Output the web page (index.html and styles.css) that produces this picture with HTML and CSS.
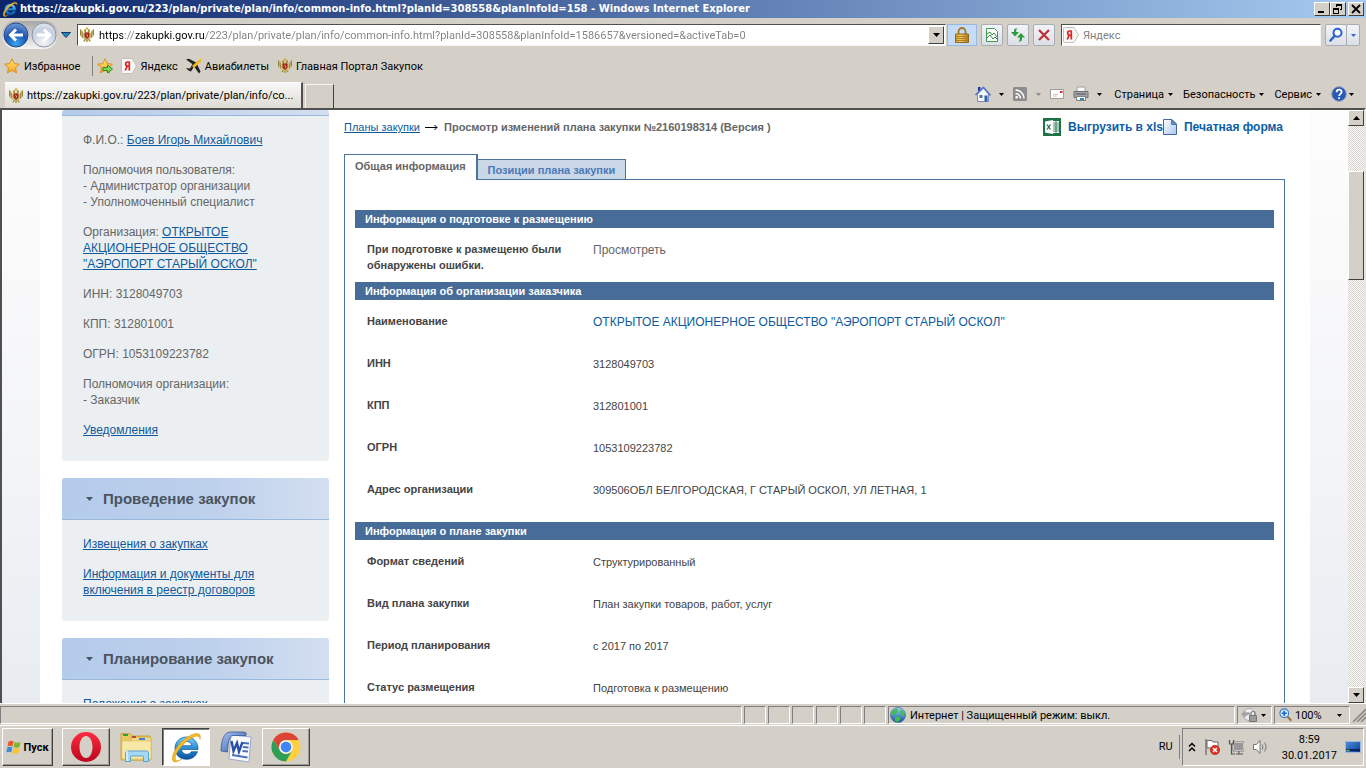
FILE: index.html
```html
<!DOCTYPE html>
<html lang="ru">
<head>
<meta charset="utf-8">
<title>Просмотр изменений плана закупки</title>
<link rel="stylesheet" href="styles.css">
</head>
<body>
<svg class="defs" aria-hidden="true">
  <defs>
    <linearGradient id="ieBlue" x1="0" y1="0" x2="0" y2="1"><stop offset="0" stop-color="#7fd0f8"/><stop offset=".5" stop-color="#2b8fd8"/><stop offset="1" stop-color="#0b4f9c"/></linearGradient>
    <radialGradient id="backBlue" cx=".5" cy=".85" r=".9"><stop offset="0" stop-color="#3aa5f0"/><stop offset=".5" stop-color="#1d55b0"/><stop offset="1" stop-color="#7fa3dc"/></radialGradient>
    <radialGradient id="fwdGrey" cx=".5" cy=".8" r=".9"><stop offset="0" stop-color="#f4f6fa"/><stop offset=".6" stop-color="#c4cede"/><stop offset="1" stop-color="#f0f3f8"/></radialGradient>
    <linearGradient id="starGold" x1="0" y1="0" x2="0" y2="1"><stop offset="0" stop-color="#ffe680"/><stop offset="1" stop-color="#f6a51c"/></linearGradient>
    <linearGradient id="lockGold" x1="0" y1="0" x2="1" y2="0"><stop offset="0" stop-color="#e0a42c"/><stop offset=".4" stop-color="#f0c860"/><stop offset="1" stop-color="#b87c18"/></linearGradient>
    <linearGradient id="operaRed" x1="0" y1="0" x2="0" y2="1"><stop offset="0" stop-color="#ff2a40"/><stop offset="1" stop-color="#b8081c"/></linearGradient>
    <linearGradient id="docBlue" x1="0" y1="0" x2="1" y2="1"><stop offset="0" stop-color="#ffffff"/><stop offset="1" stop-color="#a9c4ee"/></linearGradient>
    <linearGradient id="wordBlue" x1="0" y1="0" x2="1" y2="1"><stop offset="0" stop-color="#a8c4ee"/><stop offset="1" stop-color="#2c55a8"/></linearGradient>
    <linearGradient id="globeBlue" x1="0" y1="0" x2="0" y2="1"><stop offset="0" stop-color="#a4d0f0"/><stop offset="1" stop-color="#1450a0"/></linearGradient>
    <linearGradient id="screenBlue" x1="0" y1="0" x2="1" y2="1"><stop offset="0" stop-color="#4a90e0"/><stop offset="1" stop-color="#0c3a90"/></linearGradient>
    <symbol id="ie" viewBox="0 0 32 32">
      <path d="M28 18.500H11.500c.3 3 2.500 4.700 5.200 4.700 2 0 3.600-.8 4.600-2.500h6.200c-1.700 5-6 7.600-11 7.600C9.800 28.300 5 23.800 5 17.300 5 10.800 9.900 6 16.500 6 23.500 6 28.300 11 28 18.500zM11.600 14.700h10.100c-.3-2.600-2.400-4.200-5-4.200s-4.700 1.600-5.100 4.200z" fill="url(#ieBlue)" stroke="#0c5590" stroke-width=".7"/>
      <path d="M3.500 30.500C-1 26 8 11 20 4.500 27 .8 32 2 30 8.500c.1-4-3.500-4.300-8.500-1.500C12 12.500 1.500 26.500 6.500 29.500c1.500.6 4-.7 5.500-1.700-3 2.700-6.500 4-8.500 2.700z" fill="#f5b823" stroke="#c98a10" stroke-width=".4"/>
    </symbol>
    <symbol id="eagle" viewBox="0 0 16 16">
      <path d="M1.500 2 1 5l.5 4 2 2.500 2 .5L4 14l1 1 2-1.500L8 15.500l1-2 2 1.500 1-1-1.500-2 2-.5 2-2.500.5-4-.5-3-2 1.500L11.500 6H4.500L3.500 3.500z" fill="#d0bf7c"/>
      <path d="M1.500 2.500v6M3 4.500 3.500 10M14.500 2.500v6M13 4.500 12.500 10M5 14l1.500-2M11 14l-1.500-2M8 12.500V15" stroke="#948440" fill="none"/>
      <path d="M5 3.500q0-1.500 1.800-1.200L7.500 6H6zM11 3.500q0-1.500-1.800-1.200L8.500 6H10z" fill="#a88a2c"/>
      <path d="M6.800.5h2.400v2H6.800z" fill="#d4a83c"/>
      <path d="M5.500 5.500h5v4.300L8 12 5.500 9.800z" fill="#a02818"/>
      <path d="m7.200 7 1.500 1-.8 2" stroke="#e8c8b0" stroke-width=".7" fill="none"/>
    </symbol>
    <symbol id="star" viewBox="0 0 16 16"><path d="m8 .8 2.200 4.800 5.200.6-3.900 3.500 1.100 5.200L8 12.300l-4.600 2.600 1.100-5.200L.6 6.200l5.200-.6z" fill="url(#starGold)" stroke="#d8891a" stroke-width=".9" stroke-linejoin="round"/></symbol>
    <symbol id="yandex" viewBox="0 0 16 16">
      <path d="M1.500.5H11l4.500 7.500-4.500 7.500H1.500a1 1 0 0 1-1-1v-13a1 1 0 0 1 1-1z" fill="#f7f7f7" stroke="#c4c0b8"/>
      <path d="M8.300 3.500v9M8.300 4H6.400c-2.300 0-2.300 4 0 4h1.900M6.200 8.200 4.200 12.500" fill="none" stroke="#e02020" stroke-width="1.700"/>
    </symbol>
    <symbol id="caret" viewBox="0 0 7 4"><path d="M0 0h7L3.500 4z" fill="currentColor"/></symbol>
  </defs>
</svg>

<header class="titlebar">
  <svg class="icon16"><use href="#ie"/></svg>
  <h1 class="window-title">https://zakupki.gov.ru/223/plan/private/plan/info/common-info.html?planId=308558&amp;planInfoId=158 - Windows Internet Explorer</h1>
  <button class="win-btn" aria-label="Свернуть"><svg viewBox="0 0 12 10"><path d="M2 7h6v2H2z"/></svg></button>
  <button class="win-btn" aria-label="Восстановить"><svg viewBox="0 0 12 10"><path d="M4 0h6v6H8V5h1V2H5v1H4zM1 4h6v6H1zm1 2v3h4V6z" fill-rule="evenodd"/></svg></button>
  <button class="win-btn win-close" aria-label="Закрыть"><svg viewBox="0 0 12 10"><path d="m2 1 8 8M10 1 2 9" stroke="#000" stroke-width="1.800"/></svg></button>
</header>

<nav class="addressbar" aria-label="Навигация">
  <div class="travel">
    <button class="travel-btn" aria-label="Назад"><svg viewBox="0 0 26 26"><circle cx="13" cy="13" r="12" fill="url(#backBlue)" stroke="#234a8c"/><path d="M20 13H8M13 7.500 7.500 13l5.500 5.500" fill="none" stroke="#fff" stroke-width="3"/></svg></button>
    <button class="travel-btn" aria-label="Вперёд"><svg viewBox="0 0 26 26"><circle cx="13" cy="13" r="12" fill="url(#fwdGrey)" stroke="#8c96a4"/><path d="M6 13h12M13 7.500l5.500 5.500-5.500 5.500" fill="none" stroke="#fff" stroke-width="3"/></svg></button>
  </div>
  <button class="history-btn" aria-label="Последние страницы"><svg viewBox="0 0 10 6"><path d="M.5.500h9L5 5.500z" fill="#1c86c8" stroke="#123c68"/></svg></button>
  <div class="field field-address">
    <svg class="icon16"><use href="#eagle"/></svg>
    <input class="field-input url-input" type="text" aria-label="Адрес" value="https://zakupki.gov.ru/223/plan/private/plan/info/common-info.html?planId=308558&amp;planInfoId=1586657&amp;versioned=&amp;activeTab=0">
    <button class="combo-btn" aria-label="Показать адреса"><svg class="caret"><use href="#caret"/></svg></button>
  </div>
  <button class="lock-btn" aria-label="Безопасность сайта"><svg class="icon16" viewBox="0 0 16 16"><path d="M4.500 8V4.500a3.500 3.500 0 0 1 7 0V8" fill="none" stroke="#a87820" stroke-width="1.800"/><path d="M1.500 7h13v8.500h-13z" fill="url(#lockGold)" stroke="#94661a"/><path d="M2 9.500h12M2 11.500h12M2 13.500h12" stroke="#a4731c" stroke-width=".8"/></svg></button>
  <button class="tool-btn" aria-label="Режим совместимости"><svg viewBox="0 0 16 16"><path d="M2.500 1.500h8l3 3v10h-11z" fill="#fff" stroke="#3c9c50"/><path d="m3 7 3-2 2 3 2-2 3 4M3 11l3-3 3 4 2-2 2 2" stroke="#2f8c44" fill="none"/></svg></button>
  <button class="tool-btn" aria-label="Обновить"><svg viewBox="0 0 16 16"><path d="M7.500 1.500H6C4.500 1.500 4 2.500 4 4v1H1l4 4.500L9 5H6.200c0-2 0-2.500 1.300-3.500z" fill="#2c9c3c"/><path d="M8.500 14.500H10c1.500 0 2-1 2-2.500v-1.500h3L11 6 7 10.500h2.800c0 2 0 3-1.300 4z" fill="#2c9c3c"/></svg></button>
  <button class="tool-btn" aria-label="Остановить"><svg viewBox="0 0 16 16"><path d="m3 3 10 10M13 3 3 13" stroke="#c03038" stroke-width="2.200"/></svg></button>
  <div class="field field-search">
    <svg class="icon16"><use href="#yandex"/></svg>
    <input class="field-input" type="text" aria-label="Поиск" placeholder="Яндекс">
  </div>
  <div class="search-group">
    <button class="tool-btn" aria-label="Найти"><svg viewBox="0 0 16 16"><circle cx="9.500" cy="5.800" r="4" fill="#fff" stroke="#2a62d0" stroke-width="2"/><path d="m6.500 9-4 4.500" stroke="#2a62d0" stroke-width="2.600" stroke-linecap="round"/></svg></button>
    <button class="tool-btn tool-narrow" aria-label="Параметры поиска"><svg class="caret caret-blue"><use href="#caret"/></svg></button>
  </div>
</nav>

<nav class="favorites" aria-label="Избранное">
  <button class="fav-button"><svg class="icon16"><use href="#star"/></svg>Избранное</button>
  <button class="fav-add" aria-label="Добавить в избранное"><svg class="icon16" viewBox="0 0 16 16"><use href="#star"/><path d="M6 9.500h4.500V7l5 4-5 4v-2.500H6z" fill="#7ed858" stroke="#2c8c24"/></svg></button>
  <a class="fav-link" href="#"><svg class="icon16"><use href="#yandex"/></svg>Яндекс</a>
  <a class="fav-link" href="#"><svg class="icon16" viewBox="0 0 16 16"><path d="M0 1.500 3 .8l8 4.200-2 3zM11 6l3.500 7.500-1.500 2L8 8.500zM9 7l-4 6.500-2.500-1L0 10l4 .5L6.500 6z" fill="#222"/><path d="M14.500.5 15.500 3 8 10 6 8z" fill="#f2b81c"/></svg>Авиабилеты</a>
  <a class="fav-link" href="#"><svg class="icon16"><use href="#eagle"/></svg>Главная Портал Закупок</a>
</nav>

<div class="tabrow">
  <button class="browser-tab"><svg class="icon16"><use href="#eagle"/></svg><span class="tab-title">https://zakupki.gov.ru/223/plan/private/plan/info/co...</span></button>
  <button class="new-tab" aria-label="Создать вкладку"></button>
  <div class="commands">
    <button class="cmd" aria-label="Домой"><svg class="icon16" viewBox="0 0 16 16"><path d="M3 1h2.500v5H3z" fill="#2038a8"/><path d="M2.500 8 8.500 2l5 6v7.500h-11z" fill="#f4f6fc" stroke="#7888b8"/><path d="m.5 9 8-7.500 7 8" fill="none" stroke="#5c78c0" stroke-width="1.600"/><path d="M4.500 9h3v3h-3z" fill="#58709c"/><path d="M9.500 9.500h3v6h-3z" fill="#2860b0"/></svg><svg class="caret cmd-caret"><use href="#caret"/></svg></button>
    <button class="cmd cmd-off" aria-label="Веб-каналы"><svg class="icon16" viewBox="0 0 16 16"><rect x="1" y="1" width="14" height="14" rx="1.500" fill="#8c8c8c"/><circle cx="4.700" cy="11.300" r="1.300" fill="#fff"/><path d="M3.500 7.500a5 5 0 0 1 5 5M3.500 4a8.500 8.500 0 0 1 8.500 8.500" fill="none" stroke="#fff" stroke-width="1.500"/></svg><svg class="caret cmd-caret"><use href="#caret"/></svg></button>
    <button class="cmd" aria-label="Почта"><svg class="icon16" viewBox="0 0 16 16"><path d="M1.500 3.500h13v9h-13z" fill="#fdfdfd" stroke="#a09c98"/><path d="M11 5h2.500v2H11z" fill="#d02838"/><path d="M4 8.500h5M4 10h4" stroke="#c8c8d0"/></svg></button>
    <button class="cmd" aria-label="Печать"><svg class="icon16" viewBox="0 0 16 16"><path d="M4 1h8v5H4z" fill="#f8f8f8" stroke="#a0a0a0"/><path d="M1 5.500h14v6H1z" fill="#a4a4a8" stroke="#707074"/><path d="M3 8h10" stroke="#555"/><path d="M3.500 10.500h9v4h-9z" fill="#fff" stroke="#808080"/><path d="M7 12h4v2H7z" fill="#3088b0"/></svg><svg class="caret cmd-caret"><use href="#caret"/></svg></button>
    <button class="cmd cmd-text">Страница<svg class="caret"><use href="#caret"/></svg></button>
    <button class="cmd cmd-text">Безопасность<svg class="caret"><use href="#caret"/></svg></button>
    <button class="cmd cmd-text">Сервис<svg class="caret"><use href="#caret"/></svg></button>
    <button class="cmd cmd-help" aria-label="Справка"><svg class="icon16" viewBox="0 0 16 16"><circle cx="8" cy="8" r="7.200" fill="#2858b8" stroke="#7c90b8"/><path d="M5.600 6.200c0-3.400 5-3.200 5-.2 0 1.900-2.400 1.900-2.400 4M8.100 11.200v1.900" fill="none" stroke="#fff" stroke-width="1.800"/></svg><svg class="caret"><use href="#caret"/></svg></button>
  </div>
</div>

<div class="viewport">
  <div class="page">
    <div class="sheet">
      <aside class="sidebar">
        <section class="panel">
          <div class="panel-edge"></div>
          <div class="panel-body">
            <p>Ф.И.О.: <a href="#">Боев Игорь Михайлович</a></p>
            <p>Полномочия пользователя:<br>- Администратор организации<br>- Уполномоченный специалист</p>
            <p>Организация: <a href="#">ОТКРЫТОЕ АКЦИОНЕРНОЕ ОБЩЕСТВО "АЭРОПОРТ СТАРЫЙ ОСКОЛ"</a></p>
            <p>ИНН: 3128049703</p>
            <p>КПП: 312801001</p>
            <p>ОГРН: 1053109223782</p>
            <p>Полномочия организации:<br>- Заказчик</p>
            <p><a href="#">Уведомления</a></p>
          </div>
        </section>
        <section class="panel">
          <h2 class="panel-head"><svg class="caret"><use href="#caret"/></svg>Проведение закупок</h2>
          <div class="panel-body">
            <p><a href="#">Извещения о закупках</a></p>
            <p><a href="#">Информация и документы для включения в реестр договоров</a></p>
          </div>
        </section>
        <section class="panel">
          <h2 class="panel-head"><svg class="caret"><use href="#caret"/></svg>Планирование закупок</h2>
          <div class="panel-body">
            <p><a href="#">Положения о закупках</a></p>
          </div>
        </section>
      </aside>
      <main class="main">
        <div class="topline">
          <div class="crumbs">
            <a href="#">Планы закупки</a>
            <svg class="crumb-arrow" viewBox="0 0 13 7"><path d="M0 3.500h12M9.500 1l2.500 2.500L9.500 6" fill="none" stroke="#000"/></svg>
            <strong>Просмотр изменений плана закупки №2160198314 (Версия )</strong>
          </div>
          <div class="exports">
            <a class="export-xls" href="#"><svg class="icon18" viewBox="0 0 18 18"><path d="M0 0h18v18H0z" fill="#1f7246"/><path d="M9.500 3H16v12H9.500z" fill="#fff"/><path d="M10 5h6M10 7h6M10 9h6M10 11h6M10 13h6M13 3v12" stroke="#1f7246" stroke-width=".8"/><path d="m2 3.500 8-1.500v14l-8-1.500z" fill="#fff"/><path d="m4 6.500 3.500 5M7.500 6.500 4 11.500" stroke="#1f7246" stroke-width="1.300"/></svg><span>Выгрузить в xls</span></a>
            <a class="export-print" href="#"><svg class="icon-doc" viewBox="0 0 14 16"><path d="M.5.500h8.500l4.500 4.500v10.500H.5z" fill="url(#docBlue)" stroke="#46679c"/><path d="M8.500.5v5h5z" fill="#6c8cc4" stroke="#46679c" stroke-width=".8"/></svg><span>Печатная форма</span></a>
          </div>
        </div>
        <div class="tabs" role="tablist">
          <button class="tab tab-active" role="tab" aria-selected="true">Общая информация</button>
          <button class="tab" role="tab" aria-selected="false">Позиции плана закупки</button>
        </div>
        <div class="tabpanel" role="tabpanel">
          <h3 class="bar">Информация о подготовке к размещению</h3>
          <dl class="props">
            <div class="prop"><dt>При подготовке к размещеню были обнаружены ошибки.</dt><dd class="large">Просмотреть</dd></div>
          </dl>
          <h3 class="bar">Информация об организации заказчика</h3>
          <dl class="props props-spaced">
            <div class="prop"><dt>Наименование</dt><dd class="large"><a href="#">ОТКРЫТОЕ АКЦИОНЕРНОЕ ОБЩЕСТВО "АЭРОПОРТ СТАРЫЙ ОСКОЛ"</a></dd></div>
            <div class="prop"><dt>ИНН</dt><dd>3128049703</dd></div>
            <div class="prop"><dt>КПП</dt><dd>312801001</dd></div>
            <div class="prop"><dt>ОГРН</dt><dd>1053109223782</dd></div>
            <div class="prop"><dt>Адрес организации</dt><dd>309506ОБЛ БЕЛГОРОДСКАЯ, Г СТАРЫЙ ОСКОЛ, УЛ ЛЕТНАЯ, 1</dd></div>
          </dl>
          <h3 class="bar">Информация о плане закупки</h3>
          <dl class="props">
            <div class="prop"><dt>Формат сведений</dt><dd>Структурированный</dd></div>
            <div class="prop"><dt>Вид плана закупки</dt><dd>План закупки товаров, работ, услуг</dd></div>
            <div class="prop"><dt>Период планирования</dt><dd>с 2017 по 2017</dd></div>
            <div class="prop"><dt>Статус размещения</dt><dd>Подготовка к размещению</dd></div>
          </dl>
        </div>
      </main>
    </div>
  </div>
  <div class="scrollbar">
    <button class="scroll-btn" aria-label="Вверх"><svg class="caret caret-up"><use href="#caret"/></svg></button>
    <div class="scroll-track"><div class="scroll-thumb"></div></div>
    <button class="scroll-btn" aria-label="Вниз"><svg class="caret"><use href="#caret"/></svg></button>
  </div>
</div>

<footer class="statusbar">
  <div class="cell cell-wide"></div>
  <div class="cell"></div><div class="cell"></div><div class="cell"></div><div class="cell"></div><div class="cell"></div><div class="cell"></div>
  <div class="cell cell-zone"><svg class="icon16" viewBox="0 0 16 16"><circle cx="8" cy="8" r="7.500" fill="url(#globeBlue)" stroke="#285c98" stroke-width=".6"/><path d="M3 3.500 7 1.500l1 2L6 6.500 4 8 1.500 7zM10 3l3 1 1.800 4-2.300 1.500L10.500 6.500zM5.500 9.500l4 .5 1 2.500-3 2.500-3-1.500z" fill="#3cc048"/></svg><span>Интернет | Защищенный режим: выкл.</span></div>
  <button class="cell cell-lock" aria-label="Конфиденциальность"><svg class="icon16" viewBox="0 0 16 16"><circle cx="8" cy="7.500" r="6" fill="#eee" stroke="#aaa"/><path d="m0 7 4.500-3.500v2C7 5 9 5 10 7L4.500 9v2z" fill="#a4a4a4"/><path d="M8.500 8.500h7v6h-7z" fill="#9c9c9c" stroke="#777"/><path d="M10 8.500v-2a2 2 0 0 1 4 0v2" fill="none" stroke="#777" stroke-width="1.200"/></svg><svg class="caret"><use href="#caret"/></svg></button>
  <button class="cell cell-zoom"><svg class="icon14" viewBox="0 0 16 16"><path d="m9 9 5 5.500" stroke="#a06c3c" stroke-width="2.400"/><circle cx="6" cy="6" r="5" fill="#d8ecfc" stroke="#3c78c0" stroke-width="1.200"/><path d="M6 3v6M3 6h6" stroke="#1868d0" stroke-width="1.900"/></svg><span>100%</span><svg class="caret"><use href="#caret"/></svg></button>
  <svg class="grip" viewBox="0 0 14 14"><path d="M1 14 14 1M5 14l9-9M9 14l5-5" stroke="#8c8880" stroke-width="1.600"/></svg>
</footer>

<footer class="taskbar">
  <button class="task start"><svg class="start-flag" viewBox="0 0 16 16"><path d="M2.500 2.500q2.500-1.500 5 0L6.500 7.500q-2.500-1.500-5 0z" fill="#e8582c"/><path d="M8.500 3q2.500 1.500 6 0l-1 5q-3 1.500-6 0z" fill="#7cb82c"/><path d="M1.300 8.500q2.500-1.500 5 0l-1 5q-2.500-1.500-5 0z" fill="#3c88d8"/><path d="M7.300 9q2.500 1.500 6 0l-1 5q-3 1.500-6 0z" fill="#f8c428"/></svg>Пуск</button>
  <button class="task task-opera" aria-label="Opera"><svg class="icon32" viewBox="0 0 32 32"><path fill-rule="evenodd" d="M16 1a15 15 0 1 1 0 30 15 15 0 0 1 0-30zm0 4c-4 0-6.500 5-6.500 11S12 27 16 27s6.500-5 6.500-11S20 5 16 5z" fill="url(#operaRed)"/></svg></button>
  <button class="task task-flat" aria-label="Проводник"><svg class="icon32" viewBox="0 0 32 32"><path d="M1 5V2.500h9L12 5h18v24H1z" fill="#e8c860" stroke="#c8a440"/><path d="M3 3h5v2H3z" fill="#30a040"/><path d="M11 6h20v23H11z" fill="#f0d888" stroke="#c8a440" stroke-width=".7"/><path d="M12 5h4v2h-4z" fill="#c04828"/><path d="M19 7h6v2h-6z" fill="#3c80d0"/><path d="M2 10h29v18H2z" fill="#f8e8a8" stroke="#d8bc60" stroke-width=".6"/><path d="M5.500 30.500V22q0-2 2-2h19q2 0 2 2v8.500h-5V26q0-1-1-1h-11q-1 0-1 1v4.500z" fill="#a4d8f4" stroke="#5ca4cc"/><path d="M7 20V30" stroke="#e0f4fc" stroke-width="1.500"/></svg></button>
  <button class="task task-pressed" aria-label="Internet Explorer"><svg class="icon32"><use href="#ie"/></svg></button>
  <button class="task task-flat" aria-label="Word"><svg class="icon32" viewBox="0 0 32 32"><path d="M11 4 31 6l-2 25-20-3z" fill="#f8faff" stroke="#98aacc"/><path d="M23 12l6 .5M23 16l5.500.5M22.500 20l5.500.5M12 24l15.500 2.500" stroke="#4c70b8" stroke-width="2"/><path d="M1 20C1 10 4 1 10 1h14q3 0 2 3.500H13C9 5 8 12 7.500 21z" fill="url(#wordBlue)" stroke="#2c4c94" stroke-width=".7"/><path d="m11.500 10 2 10 3.500-8 2 8.500L22.500 11" fill="none" stroke="#2850a8" stroke-width="2.400"/></svg></button>
  <button class="task" aria-label="Chrome"><svg class="icon32" viewBox="0 0 32 32"><circle cx="16" cy="16" r="14.500" fill="#fcd040"/><path d="M3.440 8.750A14.500 14.500 0 0 1 28.560 8.750L28.600 9H16A7 7 0 0 0 9.940 19.500z" fill="#db4437"/><path d="M3.440 8.750A14.500 14.500 0 0 0 16 30.500L22.060 19.500A7 7 0 0 1 9.940 19.500z" fill="#2f9e58"/><circle cx="16" cy="16" r="6.800" fill="#fff"/><circle cx="16" cy="16" r="5.400" fill="#4285f4"/></svg></button>
  <div class="lang">RU</div>
  <div class="tray">
    <button class="tray-btn tray-more" aria-label="Показать скрытые значки"><svg viewBox="0 0 8 10"><path d="m1 4.500 3-3 3 3M1 9l3-3 3 3" fill="none" stroke="#000" stroke-width="1.500"/></svg></button>
    <button class="tray-btn" aria-label="Центр поддержки"><svg class="icon16" viewBox="0 0 16 16"><path d="M2 0v16" stroke="#777" stroke-width="1.500"/><path d="M3 1.500h5l1 1.500h5v7H8L7 9H3z" fill="#fff" stroke="#666"/><circle cx="11" cy="11" r="4.700" fill="#e03020" stroke="#a81c14" stroke-width=".6"/><path d="m9 9 4 4M13 9l-4 4" stroke="#fff" stroke-width="1.500"/></svg></button>
    <button class="tray-btn" aria-label="Сеть"><svg class="icon16" viewBox="0 0 16 16"><path d="M5.500 3.500h10v8h-10z" fill="#999" stroke="#fff" /><path d="M5 3h11v9H5z" fill="none" stroke="#555" stroke-width=".7"/><path d="M8 15h7M11 12v3" stroke="#555"/><path d="M1.500 1v4h4V1M3.500 5v10H7" fill="none" stroke="#555" stroke-width="1.200"/></svg></button>
    <button class="tray-btn" aria-label="Громкость"><svg class="icon16" viewBox="0 0 16 16"><path d="M1.500 5.500h3L8 1.500v13l-3.500-4h-3z" fill="#fff" stroke="#777"/><path d="M10 5.500q1.500 2.500 0 5M12.500 3.500q3 4.500 0 9" fill="none" stroke="#888" stroke-width="1.200"/></svg></button>
    <div class="clock"><time>8:59</time><time>30.01.2017</time></div>
    <button class="tray-btn" aria-label="Показать рабочий стол"><svg class="icon16" viewBox="0 0 16 16"><path d="M.5 2.500h15v11H.5z" fill="url(#screenBlue)" stroke="#9cb8dc"/><path d="M1 11h14" stroke="#0c2458" stroke-width="2"/><path d="M1.500 11.500h3" stroke="#5cc060" stroke-width="1.500"/></svg></button>
  </div>
</footer>
</body>
</html>
```
FILE: styles.css
```css
* { box-sizing: border-box; }

body {
  margin: 0;
  height: 100vh;
  display: flex;
  flex-direction: column;
  overflow: hidden;
  background: #d4d0c8;
  color: #000;
  font: 11px/15px Roboto, Tahoma, sans-serif;
}

button {
  margin: 0;
  padding: 0;
  border: 0;
  background: none;
  color: inherit;
  font: inherit;
  display: flex;
  align-items: center;
}

h1, h2, h3, p, dl, dd { margin: 0; }

svg { display: block; flex: none; }
.defs { position: absolute; width: 0; height: 0; }
.icon14 { width: 14px; height: 14px; }
.icon16 { width: 16px; height: 16px; }
.icon18 { width: 18px; height: 18px; }
.icon32 { width: 32px; height: 32px; }
.icon-doc { width: 14px; height: 16px; }
.caret { width: 7px; height: 4px; }
.caret-up { transform: rotate(180deg); }
.caret-blue { color: #2a62d0; }

/* Title bar */
.titlebar {
  flex: none;
  height: 18px;
  display: flex;
  align-items: center;
  padding: 0 2px;
  background: linear-gradient(to right, #0a246a, #a6caf0);
  color: #fff;
}
.window-title {
  flex: 1;
  margin-left: 2px;
  overflow: hidden;
  white-space: nowrap;
  font: bold 10px/16px "DejaVu Sans", Verdana, sans-serif;
}
.win-btn {
  width: 16px;
  height: 14px;
  justify-content: center;
  background: #d4d0c8;
  border: 1px solid;
  border-color: #fff #404040 #404040 #fff;
}
.win-btn svg { width: 12px; height: 10px; }
.win-close { margin-left: 2px; }

/* Address row */
.addressbar {
  flex: none;
  height: 34px;
  display: flex;
  align-items: center;
  padding: 0 6px 0 2px;
}
.travel {
  display: flex;
  gap: 2px;
  padding: 1px;
  border-radius: 14px;
  background: linear-gradient(#a8a8a8, #f4f4f4);
}
.travel-btn svg { width: 26px; height: 26px; }
.history-btn { margin: 0 6px 0 3px; }
.history-btn svg { width: 10px; height: 6px; }
.field {
  display: flex;
  align-items: center;
  height: 22px;
  padding: 1px;
  background: #fff;
  border: 1px solid;
  border-color: #505050 #f4f4f4 #f4f4f4 #505050;
}
.field-address { flex: 1; min-width: 0; }
.field-input {
  flex: 1;
  min-width: 0;
  border: 0;
  padding: 0 4px;
  outline: 0;
  background: none;
  font: inherit;
  color: #000;
}
.field-input::placeholder { color: #808080; opacity: 1; }
.url-input {
  color: transparent;
  background: linear-gradient(to right, #000 28px, #808080 28px, #808080 41px, #000 41px, #000 109px, #808080 109px);
  -webkit-background-clip: text;
  background-clip: text;
}
.combo-btn, .scroll-btn {
  flex: none;
  width: 16px;
  height: 18px;
  justify-content: center;
  background: #d4d0c8;
  border: 1px solid;
  border-color: #fff #404040 #404040 #fff;
}
.lock-btn {
  flex: none;
  width: 30px;
  height: 22px;
  margin: 0 4px 0 1px;
  justify-content: center;
  background: #c4dcf8;
  border: 1px solid #98b8e0;
}
.tool-btn {
  flex: none;
  width: 22px;
  height: 22px;
  margin-right: 4px;
  justify-content: center;
  background: linear-gradient(#f2f4f8, #dcdfe6);
  border: 1px solid #a8acb4;
  border-radius: 2px;
}
.tool-btn svg { width: 16px; height: 16px; }
.field-search { flex: 0 1 260px; margin: 0 4px 0 2px; }
.search-group { display: flex; }
.search-group .tool-btn { margin: 0; }
.search-group .tool-narrow { width: 14px; margin-left: -1px; }
.tool-narrow .caret { width: 5px; height: 3px; }

/* Favorites row */
.favorites {
  flex: none;
  height: 28px;
  display: flex;
  align-items: center;
  padding-left: 4px;
}
.fav-button { gap: 4px; padding-right: 12px; }
.fav-add {
  height: 20px;
  padding: 0 8px 0 4px;
  border-left: 1px solid #808080;
}
.fav-link {
  display: flex;
  align-items: center;
  gap: 3px;
  margin-right: 8px;
  color: inherit;
  text-decoration: none;
}

/* Browser tabs and commands */
.tabrow {
  flex: none;
  height: 28px;
  display: flex;
  align-items: flex-end;
  padding-left: 5px;
}
.browser-tab {
  flex: 0 1 298px;
  min-width: 0;
  height: 26px;
  gap: 3px;
  padding: 0 4px 0 3px;
  background: linear-gradient(#f8f8f6, #dedbd5);
  border-top: 1px solid #fff;
  border-right: 2px solid #505050;
}
.tab-title { white-space: nowrap; overflow: hidden; }
.new-tab {
  flex: none;
  width: 29px;
  height: 24px;
  margin-left: 2px;
  border: 1px solid #f4f4f4;
  border-right-color: #404040;
  border-bottom: 0;
}
.commands {
  margin-left: auto;
  height: 28px;
  display: flex;
  align-items: center;
  padding-right: 12px;
}
.commands .caret { width: 5px; height: 3px; }
.cmd { flex: none; margin-right: 8px; }
.cmd-caret { margin-left: 8px; }
.cmd-off .caret { color: #8c8c8c; }
.cmd-text { gap: 4px; margin: 0 10px 0 0; }
.cmd-text:nth-child(5) { margin-left: 4px; }
.cmd-help { gap: 2px; margin: 0; }

/* Document window */
.viewport {
  flex: 1;
  min-height: 0;
  display: flex;
  border-top: 2px solid #505050;
  border-left: 2px solid #505050;
  border-right: 2px solid #e8e6e2;
}
.page {
  flex: 1;
  min-width: 0;
  overflow: hidden;
  padding: 0 38px;
  background: linear-gradient(#fdfdfd, #f4f5f7 55%, #e8ecf1);
}
.sheet {
  display: flex;
  gap: 15px;
  height: 100%;
  padding: 0 25px 0 22px;
  background: #fff;
  font: 12px/16px "Liberation Sans", Arial, sans-serif;
  color: #666;
}
.sheet a { color: #0f5a9c; }

.sidebar { flex: none; width: 267px; }
.panel {
  margin-bottom: 17px;
  border-radius: 3px;
  overflow: hidden;
  background: #ebeff2;
}
.panel-edge {
  height: 6px;
  background: linear-gradient(to right, #b4cbea, #d3dff0);
  border-bottom: 1px solid #9ab7dc;
}
.panel-head {
  display: flex;
  align-items: center;
  gap: 10px;
  height: 42px;
  padding-left: 24px;
  background: linear-gradient(to right, #b4cbea, #bdd0ec 55%, #d3dff0);
  border-bottom: 1px solid #9ab7dc;
  font-size: 15px;
  color: #4a545e;
}
.panel-body { padding: 16px 40px 9px 21px; }
.panel-body p { margin-bottom: 14px; }

.main { flex: 1; min-width: 0; }
.topline {
  display: flex;
  justify-content: space-between;
  align-items: center;
  height: 34px;
  font-size: 11px;
}
.crumbs { display: flex; align-items: center; gap: 5px; }
.crumb-arrow { width: 13px; height: 7px; margin-right: 1px; }
.exports { display: flex; font-size: 12px; font-weight: bold; }
.exports a { display: flex; align-items: center; text-decoration: none; }
.sheet .exports a { color: #0d5ea6; }
.export-xls { gap: 7px; }
.export-print { gap: 7px; padding-right: 2px; }

.tabs {
  display: flex;
  align-items: flex-end;
  margin-top: 10px;
}
.tab {
  height: 20px;
  padding: 0 10px;
  border: 1px solid #4c7399;
  border-left: 0;
  border-bottom: 0;
  background: #c9d7e7;
  color: #4a7ab8;
  font-weight: bold;
  font-size: 11px;
}
.tab-active {
  position: relative;
  z-index: 1;
  height: 26px;
  margin-bottom: -1px;
  padding-bottom: 3px;
  border-left: 1px solid #4c7399;
  border-right-width: 2px;
  background: #fff;
  color: #666;
}
.tabpanel {
  padding: 30px 10px 0;
  border: 1px solid #4c7399;
  border-bottom: 0;
}
.bar {
  padding-left: 10px;
  background: #486c98;
  color: #fff;
  font-size: 11px;
  line-height: 18px;
}
.props-spaced { margin-bottom: 12px; }
.prop {
  display: flex;
  min-height: 42px;
  padding: 13px 12px 9px;
  font-size: 11px;
  color: #444;
}
.prop dt { flex: none; width: 226px; padding-right: 20px; font-weight: bold; }
.prop dd { padding-top: 1px; }
.prop .large { font-size: 12px; color: #666; }
.large a { text-decoration: none; }

/* Scrollbar */
.scrollbar { flex: none; width: 16px; display: flex; flex-direction: column; }
.scroll-btn { height: 16px; }
.scroll-track {
  flex: 1;
  padding-top: 45px;
  background: repeating-conic-gradient(#fff 0 25%, #d4d0c8 0 50%) 0 0 / 2px 2px;
}
.scroll-thumb {
  height: 109px;
  background: #d4d0c8;
  border: 1px solid;
  border-color: #fff #404040 #404040 #fff;
}

/* Status bar */
.statusbar {
  flex: none;
  height: 23px;
  display: flex;
  align-items: center;
  gap: 2px;
  padding-top: 1px;
  border-top: 1px solid #fff;
  border-bottom: 1px solid #fff;
}
.cell {
  flex: none;
  width: 22px;
  height: 18px;
  display: flex;
  align-items: center;
  border: 1px solid;
  border-color: #808080 #fff #fff #808080;
}
.cell-wide { flex: 1; }
.cell-zone { width: 347px; gap: 4px; padding-left: 1px; }
.cell-lock { width: 35px; gap: 4px; padding-left: 3px; }
.cell-zoom { width: 76px; gap: 2px; padding-left: 4px; }
.cell-zoom .caret { margin-left: 13px; }
.cell-lock .caret, .cell-zoom .caret { width: 5px; height: 3px; }
.grip { width: 14px; height: 14px; }

/* Taskbar */
.taskbar {
  flex: none;
  height: 42px;
  display: flex;
  align-items: center;
  gap: 9px;
  padding: 0 2px;
}
.task {
  width: 48px;
  height: 38px;
  justify-content: center;
  border: 1px solid;
  border-color: #fff #404040 #404040 #fff;
  box-shadow: inset -1px -1px #a09c94;
}
.start { width: 51px; gap: 1px; font-weight: bold; }
.start-flag { width: 16px; height: 16px; }
.task-flat { width: 34px; border: 0; box-shadow: none; }
.task-pressed {
  background: #fff;
  border-color: #404040 #fff #fff #404040;
  box-shadow: inset 1px 1px #808080;
}
.lang {
  margin-left: auto;
  height: 24px;
  padding: 4px 6px 0 0;
  border-right: 1px solid #808080;
}
.tray {
  display: flex;
  align-items: center;
  gap: 8px;
  height: 38px;
  margin-left: -7px;
  padding: 0 2px 0 5px;
  border: 1px solid;
  border-color: #808080 #fff #fff #808080;
}
.tray-more svg { width: 8px; height: 10px; }
.clock {
  display: flex;
  flex-direction: column;
  align-items: center;
  gap: 1px;
  margin-left: 6px;
}
```
